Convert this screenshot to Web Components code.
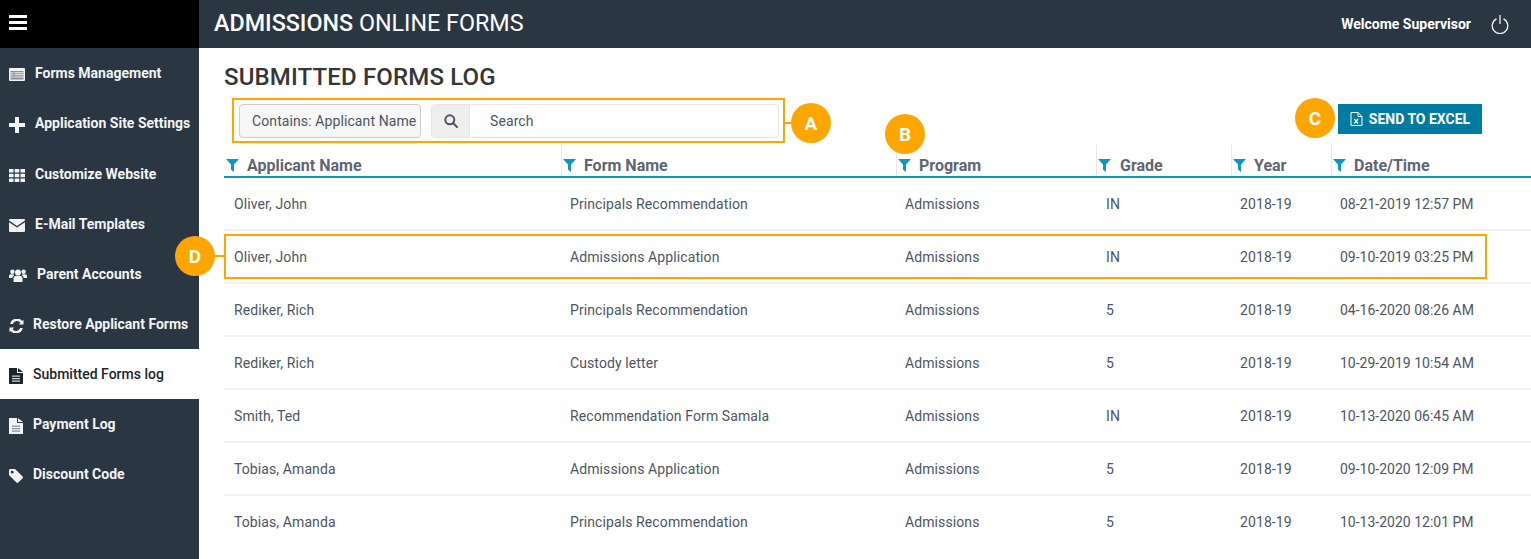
<!DOCTYPE html>
<html>
<head>
<meta charset="utf-8">
<title>Submitted Forms Log</title>
<style>
    html, body { margin: 0; height: 100%; overflow: hidden; background: #fff; }
    body { font-family: Roboto, "Liberation Sans", sans-serif; }
</style>
</head>
<body>
<app-shell>
    <side-nav slot="side">
        <nav-item icon="forms" gap="26">Forms Management</nav-item>
        <nav-item icon="plus" gap="26">Application Site Settings</nav-item>
        <nav-item icon="grid" gap="26">Customize Website</nav-item>
        <nav-item icon="mail" gap="26">E-Mail Templates</nav-item>
        <nav-item icon="users" gap="28">Parent Accounts</nav-item>
        <nav-item icon="refresh" gap="24">Restore Applicant Forms</nav-item>
        <nav-item icon="file" gap="24" active>Submitted Forms log</nav-item>
        <nav-item icon="file" gap="24">Payment Log</nav-item>
        <nav-item icon="tag" gap="24">Discount Code</nav-item>
    </side-nav>
    <top-bar slot="top"></top-bar>
    <forms-log slot="main"></forms-log>
</app-shell>

<script>
const ICONS = {
    forms: '<svg width="16" height="13" viewBox="0 0 16 13"><rect width="16" height="13" rx="1" fill="currentColor"/><path d="M1.500 3h13v8.500h-13z" fill="#8b8f94"/><path d="M1.500 4.200h3v1h-3zM1.500 6.300h3v1h-3zM1.500 8.400h3v1h-3zM5.500 4.200h9v1h-9zM5.500 6.300h9v1h-9zM5.500 8.400h9v1h-9z" fill="currentColor"/></svg>',
    plus: '<svg width="16" height="16" viewBox="0 0 16 16"><path d="M6 0h4v6h6v4h-6v6H6v-6H0V6h6z" fill="currentColor"/></svg>',
    grid: '<svg width="16" height="13" viewBox="0 0 16 13"><path d="M0 0h4.500v3.600H0zM5.700 0h4.600v3.600H5.700zM11.500 0H16v3.600h-4.500zM0 4.700h4.500v3.600H0zM5.700 4.700h4.600v3.600H5.700zM11.500 4.700H16v3.600h-4.500zM0 9.400h4.500V13H0zM5.700 9.400h4.600V13H5.700zM11.500 9.400H16V13h-4.500z" fill="currentColor"/></svg>',
    mail: '<svg width="16" height="13" viewBox="0 0 16 13"><path d="M1 0h14a1 1 0 0 1 1 1v.6L8 7 0 1.600V1a1 1 0 0 1 1-1z" fill="currentColor"/><path d="M0 3.200 8 8.600l8-5.400V12a1 1 0 0 1-1 1H1a1 1 0 0 1-1-1z" fill="currentColor"/></svg>',
    users: '<svg width="18" height="13" viewBox="0 0 18 13"><circle cx="9" cy="3.600" r="3" fill="currentColor"/><circle cx="3.400" cy="2.800" r="2.200" fill="currentColor"/><circle cx="14.600" cy="2.800" r="2.200" fill="currentColor"/><path d="M4.500 13V9.500C4.500 7.800 6 6.800 7 6.800h4c1 0 2.500 1 2.500 2.700V13z" fill="currentColor"/><path d="M0 9V7c0-1 .8-1.700 1.700-1.700h2.600c.2.500.5.900.9 1.300C4 7.200 3.400 8 3.300 9zM18 9V7c0-1-.8-1.700-1.700-1.700h-2.600c-.2.500-.5.900-.9 1.300 1.200.6 1.800 1.400 1.900 2.400z" fill="currentColor"/></svg>',
    refresh: '<svg width="15" height="14" viewBox="0 0 15 14"><path d="M14.500.800v4.700H9.800l1.800-1.800A4.500 4.500 0 0 0 3.800 5H1.200a6.900 6.900 0 0 1 12-3z" fill="currentColor"/><path d="M.5 13.200V8.500h4.700l-1.800 1.800a4.500 4.500 0 0 0 7.800-1.300h2.600a6.900 6.900 0 0 1-12 3z" fill="currentColor"/></svg>',
    file: '<svg width="14" height="16" viewBox="0 0 14 16"><path d="M0 0h8v5h6v11H0z" fill="currentColor"/><path d="M9 0l5 4H9z" fill="currentColor"/><path d="M3 7.500h8v1.200H3zM3 10h8v1.200H3zM3 12.500h8v1.200H3z" fill="var(--lines, #8a8f96)"/></svg>',
    tag: '<svg width="14" height="14" viewBox="0 0 14 14"><path d="M0 1.300C0 .6.600 0 1.300 0h4.200c.4 0 .7.100 1 .4l7.100 7.100c.5.500.5 1.300 0 1.800l-4.300 4.300c-.5.500-1.300.5-1.800 0L.4 6.500C.1 6.200 0 5.900 0 5.500zM3.200 4.600a1.400 1.400 0 1 0 0-2.800 1.400 1.400 0 0 0 0 2.800z" fill="currentColor" fill-rule="evenodd"/></svg>',
    funnel: '<svg width="13" height="13" viewBox="0 0 13 13"><path d="M0 0h13L8 5.500V13L5 10.500v-5z" fill="#0b97bf"/></svg>'
};

class AppShell extends HTMLElement {
    constructor() {
        super();
        this.attachShadow({ mode: 'open' });
    }
    connectedCallback() {
        this.shadowRoot.innerHTML = `
            <style>
                :host {
                    display: grid;
                    grid-template-columns: 199px 1fr;
                    grid-template-rows: 48px 1fr;
                    height: 559px;
                    width: 1531px;
                    position: relative;
                    overflow: hidden;
                }
                .burger {
                    background: #000;
                    display: flex;
                    align-items: center;
                    padding-left: 9px;
                    padding-bottom: 3px;
                }
                .burger svg { display: block; }
                ::slotted([slot="side"]) { grid-column: 1; grid-row: 2; }
                ::slotted([slot="top"]) { grid-column: 2; grid-row: 1; }
                ::slotted([slot="main"]) { grid-column: 2; grid-row: 2; }
            </style>
            <div class="burger">
                <svg width="18" height="15" viewBox="0 0 18 15"><path d="M0 0h18v3H0zM0 6h18v3H0zM0 12h18v3H0z" fill="#fff"/></svg>
            </div>
            <slot name="top"></slot>
            <slot name="side"></slot>
            <slot name="main"></slot>
        `;
    }
}
customElements.define('app-shell', AppShell);

class SideNav extends HTMLElement {
    constructor() {
        super();
        this.attachShadow({ mode: 'open' });
    }
    connectedCallback() {
        this.shadowRoot.innerHTML = `
            <style>
                :host {
                    display: block;
                    background: #2b3643;
                }
                ::slotted(:nth-child(2)) { height: 51px; padding-bottom: 1px; }
            </style>
            <slot></slot>
        `;
    }
}
customElements.define('side-nav', SideNav);

class NavItem extends HTMLElement {
    constructor() {
        super();
        this.attachShadow({ mode: 'open' });
    }
    connectedCallback() {
        const active = this.hasAttribute('active');
        this.shadowRoot.innerHTML = `
            <style>
                :host {
                    display: flex;
                    align-items: center;
                    height: 50px;
                    padding-left: 9px;
                    box-sizing: border-box;
                    color: ${active ? '#1d2530' : '#f2f3f4'};
                    background: ${active ? '#fff' : 'transparent'};
                    font-size: 14px;
                    font-weight: ${active ? 500 : 700};
                    --lines: ${active ? '#cfd2d5' : '#8a8f96'};
                }
                .icon {
                    width: ${this.getAttribute('gap')}px;
                    display: flex;
                    align-items: center;
                    padding-top: 3px;
                }
                svg { display: block; }
                .label { padding-bottom: 1px; }
            </style>
            <span class="icon">${ICONS[this.getAttribute('icon')]}</span>
            <span class="label"><slot></slot></span>
        `;
    }
}
customElements.define('nav-item', NavItem);

class TopBar extends HTMLElement {
    constructor() {
        super();
        this.attachShadow({ mode: 'open' });
    }
    connectedCallback() {
        this.shadowRoot.innerHTML = `
            <style>
                :host {
                    display: flex;
                    align-items: center;
                    background: #2b3643;
                    color: #fff;
                    padding: 0 22px 0 15px;
                }
                .title { font-size: 23.3px; font-weight: 400; flex: 1; padding-bottom: 2px; }
                .title b { font-weight: 500; }
                .welcome { font-size: 14px; font-weight: 700; margin-right: 20px; padding-bottom: 1px; }
                svg { display: block; }
            </style>
            <div class="title"><b>ADMISSIONS</b> ONLINE FORMS</div>
            <div class="welcome">Welcome Supervisor</div>
            <svg width="18" height="20" viewBox="0 0 18 20" fill="none" stroke="#f2f3f4" stroke-width="1.300">
                <path d="M5.500 4.800a7.800 7.800 0 1 0 7 0"/><path d="M9 1v9"/>
            </svg>
        `;
    }
}
customElements.define('top-bar', TopBar);

class SearchBar extends HTMLElement {
    constructor() {
        super();
        this.attachShadow({ mode: 'open' });
    }
    connectedCallback() {
        this.shadowRoot.innerHTML = `
            <style>
                :host {
                    display: flex;
                    gap: 10px;
                    width: 540px;
                    height: 34px;
                    font-size: 14px;
                    color: #4d5564;
                }
                .select {
                    box-sizing: border-box;
                    width: 182px;
                    border: 1px solid #ccc;
                    border-radius: 4px;
                    background: #f7f7f7;
                    display: flex;
                    align-items: center;
                    padding-left: 12px;
                    white-space: nowrap;
                    overflow: hidden;
                    letter-spacing: 0.1px;
                }
                .search {
                    box-sizing: border-box;
                    flex: 1;
                    display: flex;
                    border: 1px solid #e6e6e6;
                    border-radius: 4px;
                    overflow: hidden;
                }
                .addon {
                    width: 37px;
                    background: #eee;
                    display: flex;
                    align-items: center;
                    justify-content: center;
                    border-right: 1px solid #e6e6e6;
                }
                .field { display: flex; align-items: center; padding-left: 20px; letter-spacing: 0.1px; }
            </style>
            <div class="select">Contains: Applicant Name</div>
            <div class="search">
                <div class="addon">
                    <svg width="14" height="14" viewBox="0 0 14 14" fill="none" stroke="#4d5564" stroke-width="2"><circle cx="5.800" cy="5.800" r="4.500"/><path d="M9 9l4 4" stroke-linecap="round"/></svg>
                </div>
                <div class="field">Search</div>
            </div>
        `;
    }
}
customElements.define('search-bar', SearchBar);

class ExcelButton extends HTMLElement {
    constructor() {
        super();
        this.attachShadow({ mode: 'open' });
    }
    connectedCallback() {
        this.shadowRoot.innerHTML = `
            <style>
                :host {
                    display: flex;
                    align-items: center;
                    justify-content: center;
                    gap: 6px;
                    box-sizing: border-box;
                    width: 144px;
                    height: 30px;
                    background: #007ca3;
                    color: #fff;
                    font-size: 14px;
                    font-weight: 700;
                }
                svg { display: block; }
            </style>
            <svg width="13" height="14" viewBox="0 0 13 14" fill="none" stroke="#fff" stroke-width="1">
                <path d="M1 .5h7l4 4v9H1z"/><path d="M8 .5v4h4"/>
                <path d="M4.300 7l3.800 4.500M8.100 7l-3.800 4.500" stroke-width="1.200"/>
            </svg>
            <span>SEND TO EXCEL</span>
        `;
    }
}
customElements.define('excel-button', ExcelButton);

class CallOut extends HTMLElement {
    constructor() {
        super();
        this.attachShadow({ mode: 'open' });
    }
    connectedCallback() {
        this.shadowRoot.innerHTML = `
            <style>
                :host {
                    position: absolute;
                    left: ${this.getAttribute('x')}px;
                    top: ${this.getAttribute('y')}px;
                    display: flex;
                    align-items: center;
                    justify-content: center;
                    width: 40px;
                    height: 40px;
                    border-radius: 50%;
                    background: #ffa500;
                    color: #fff;
                    font-size: 19px;
                    font-weight: 700;
                }
            </style>
            <slot></slot>
        `;
    }
}
customElements.define('call-out', CallOut);

const COLUMNS = '337px 335px 200px 135px 100px 1fr';

class LogHead extends HTMLElement {
    constructor() {
        super();
        this.attachShadow({ mode: 'open' });
    }
    connectedCallback() {
        const cols = ['Applicant Name', 'Form Name', 'Program', 'Grade', 'Year', 'Date/Time'];
        this.shadowRoot.innerHTML = `
            <style>
                :host {
                    display: grid;
                    grid-template-columns: ${COLUMNS};
                    height: 32px;
                    border-bottom: 2px solid #0b97bf;
                    font-size: 16px;
                    font-weight: 700;
                    color: #5f6673;
                }
                .th {
                    display: flex;
                    align-items: flex-end;
                    gap: 8px;
                    padding: 0 0 1px 1px;
                    border-left: 1px solid #e8e8e8;
                    white-space: nowrap;
                }
                .th:first-of-type { border-left: 0; padding-left: 2px; }
                .th:nth-of-type(4) { gap: 9px; }
                .th svg { display: block; margin-bottom: 3px; flex: none; }
            </style>
            ${cols.map(c => `<div class="th">${ICONS.funnel}<span>${c}</span></div>`).join('')}
        `;
    }
}
customElements.define('log-head', LogHead);

class LogRow extends HTMLElement {
    constructor() {
        super();
        this.attachShadow({ mode: 'open' });
    }
    connectedCallback() {
        const cells = this.getAttribute('cells').split('|');
        this.shadowRoot.innerHTML = `
            <style>
                :host {
                    display: grid;
                    grid-template-columns: ${COLUMNS};
                    height: 53px;
                    box-sizing: border-box;
                    border-bottom: 2px solid #f1f1f1;
                    font-size: 14px;
                    color: #4d5564;
                    align-items: center;
                    letter-spacing: 0.1px;
                }
                :host(:last-child) { border-bottom-color: transparent; }
                .td { padding-left: 9px; white-space: nowrap; }
                .td:nth-of-type(1), .td:nth-of-type(4) { padding-left: 10px; }
                .td:nth-of-type(6) { letter-spacing: 0; }
            </style>
            ${cells.map(c => `<div class="td">${c}</div>`).join('')}
        `;
    }
}
customElements.define('log-row', LogRow);

class FormsLog extends HTMLElement {
    constructor() {
        super();
        this.attachShadow({ mode: 'open' });
    }
    connectedCallback() {
        const rows = [
            'Oliver, John|Principals Recommendation|Admissions|IN|2018-19|08-21-2019 12:57 PM',
            'Oliver, John|Admissions Application|Admissions|IN|2018-19|09-10-2019 03:25 PM',
            'Rediker, Rich|Principals Recommendation|Admissions|5|2018-19|04-16-2020 08:26 AM',
            'Rediker, Rich|Custody letter|Admissions|5|2018-19|10-29-2019 10:54 AM',
            'Smith, Ted|Recommendation Form Samala|Admissions|IN|2018-19|10-13-2020 06:45 AM',
            'Tobias, Amanda|Admissions Application|Admissions|5|2018-19|09-10-2020 12:09 PM',
            'Tobias, Amanda|Principals Recommendation|Admissions|5|2018-19|10-13-2020 12:01 PM'
        ];
        this.shadowRoot.innerHTML = `
            <style>
                :host {
                    display: block;
                    padding: 14px 0 0 25px;
                }
                h1 {
                    margin: 0;
                    font-size: 24px;
                    line-height: 30px;
                    font-weight: 500;
                    color: #363636;
                    letter-spacing: 0.15px;
                }
                .tools {
                    display: flex;
                    justify-content: space-between;
                    align-items: flex-start;
                    margin-top: 12px;
                    padding: 0 49px 0 15px;
                    height: 40px;
                }
                .ring { position: absolute; border: 2px solid #ffa500; box-sizing: border-box; }
                .tick { position: absolute; height: 2px; background: #ffa500; }
            </style>
            <h1>SUBMITTED FORMS LOG</h1>
            <div class="tools">
                <search-bar></search-bar>
                <excel-button></excel-button>
            </div>
            <log-head></log-head>
            <div class="rows">
                ${rows.map(r => `<log-row cells="${r}"></log-row>`).join('')}
            </div>
            <div class="ring" style="left:232px;top:98px;width:553px;height:45px"></div>
            <div class="tick" style="left:785px;top:122px;width:8px"></div>
            <call-out x="791" y="103">A</call-out>
            <call-out x="885" y="114">B</call-out>
            <call-out x="1295" y="98">C</call-out>
            <div class="ring" style="left:224px;top:234px;width:1263px;height:45px"></div>
            <div class="tick" style="left:214px;top:255px;width:10px"></div>
            <call-out x="175" y="236">D</call-out>
        `;
    }
}
customElements.define('forms-log', FormsLog);
</script>
</body>
</html>
